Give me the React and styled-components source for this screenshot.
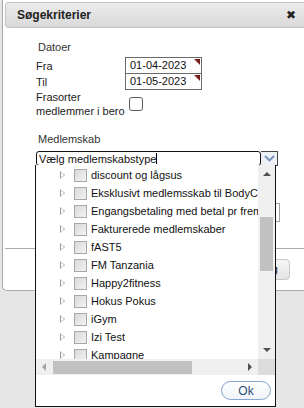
import React from "react";
import styled, { createGlobalStyle } from "styled-components";

const items = [
  "discount og lågsus",
  "Eksklusivt medlemsskab til BodyCoach",
  "Engangsbetaling med betal pr fremmøde",
  "Fakturerede medlemskaber",
  "fAST5",
  "FM Tanzania",
  "Happy2fitness",
  "Hokus Pokus",
  "iGym",
  "Izi Test",
  "Kampagne",
];

export default function App() {
  return (
    <Page>
      <Global />
      <Dialog>
        <Header>
          <Title>Søgekriterier</Title>
          <Close>✖</Close>
        </Header>
        <Body>
          <SectionTitle>Datoer</SectionTitle>
          <FieldRow>
            <Label>Fra</Label>
            <DateBox>01-04-2023</DateBox>
          </FieldRow>
          <FieldRow $joined>
            <Label>Til</Label>
            <DateBox>01-05-2023</DateBox>
          </FieldRow>
          <FieldRow>
            <Label $wrap>
              Frasorter
              <br />
              medlemmer i bero
            </Label>
            <Check />
          </FieldRow>
          <SectionTitle $gap>Medlemskab</SectionTitle>
          <Combo>
            <ComboInput>
              Vælg medlemskabstype<Caret />
            </ComboInput>
            <ComboButton>
              <svg width="11" height="7" viewBox="0 0 11 7">
                <path d="M1 1l4.5 4.5L10 1" fill="none" stroke="#6f8fbf" strokeWidth="1.8" />
              </svg>
            </ComboButton>
            <Popup>
              <ListArea>
                <List>
                  {items.map((t) => (
                    <Item key={t}>
                      <Expander />
                      <ItemCheck />
                      <ItemText>{t}</ItemText>
                    </Item>
                  ))}
                </List>
                <VScroll>
                  <Arrow $dir="up" />
                  <VThumb />
                  <Arrow $dir="down" />
                </VScroll>
              </ListArea>
              <HBar>
                <HScroll>
                  <Arrow $dir="left" $dim />
                  <HThumb />
                  <Arrow $dir="right" />
                </HScroll>
                <Corner />
              </HBar>
              <PopupFooter>
                <OkButton>Ok</OkButton>
              </PopupFooter>
            </Popup>
          </Combo>
          <BehindBox />
        </Body>
        <Footer>
          <SearchButton>Søg</SearchButton>
        </Footer>
      </Dialog>
    </Page>
  );
}

const Global = createGlobalStyle`
  html, body {
    margin: 0;
    background: #e6e6e6;
    font-family: "Liberation Sans", Arial, sans-serif;
    font-size: 11px;
    color: #222;
  }
`;

const Page = styled.div`
  height: 408px;
  position: relative;
`;

const Dialog = styled.div`
  position: relative;
  margin-left: 2px;
  height: 291px;
  box-sizing: border-box;
  background: #fff;
  border-left: 1px solid #a9a9a9;
  border-bottom: 1px solid #a9a9a9;
  border-bottom-left-radius: 5px;
  padding: 2px 0 0 2px;
  display: flex;
  flex-direction: column;
`;

const Header = styled.div`
  height: 26px;
  box-sizing: border-box;
  border: 1px solid #c4c4c4;
  border-right: none;
  border-radius: 4px 0 0 4px;
  background: linear-gradient(#ececec, #d9d9d9);
  display: flex;
  align-items: center;
  justify-content: space-between;
  padding: 0 8px 0 11px;
`;

const Title = styled.span`
  font-size: 12px;
  font-weight: bold;
  color: #222;
`;

const Close = styled.span`
  font-size: 12px;
  color: #222;
  font-family: "DejaVu Sans", sans-serif;
`;

const Body = styled.div`
  flex: 1;
  padding: 12px 0 0 31px;
  display: flex;
  flex-direction: column;
`;

const SectionTitle = styled.div`
  line-height: 14px;
  padding-left: 2px;
  color: #333;
  margin-top: ${(p) => (p.$gap ? "14px" : "0")};
  margin-bottom: ${(p) => (p.$gap ? "5px" : "3px")};
`;

const FieldRow = styled.div`
  display: flex;
  align-items: center;
  margin-top: ${(p) => (p.$joined ? "-1px" : "0")};
`;

const Label = styled.div`
  width: ${(p) => (p.$wrap ? "93px" : "89px")};
  line-height: 14px;
`;

const DateBox = styled.div`
  position: relative;
  width: 77px;
  height: 17px;
  box-sizing: border-box;
  border: 1px solid #6a6a6a;
  padding-left: 4px;
  line-height: 15px;
  font-size: 11px;
  color: #111;
  &::after {
    content: "";
    position: absolute;
    right: 1px;
    top: 1px;
    border-top: 6px solid #7c1d1d;
    border-left: 6px solid transparent;
  }
`;

const Check = styled.div`
  width: 12px;
  height: 12px;
  border: 1px solid #5c5c5c;
  border-radius: 3px;
  background: #fff;
`;

const Combo = styled.div`
  position: relative;
  display: flex;
  width: 242px;
  height: 15px;
  z-index: 2;
`;

const ComboInput = styled.div`
  flex: 1;
  box-sizing: border-box;
  border: 1.5px solid #111;
  border-radius: 3px;
  padding-left: 2px;
  line-height: 12px;
  font-size: 11px;
  color: #111;
  background: #fff;
  display: flex;
  align-items: center;
`;

const Caret = styled.span`
  width: 1px;
  height: 11px;
  background: #000;
`;

const ComboButton = styled.div`
  width: 17px;
  box-sizing: border-box;
  border: 1px solid #444;
  border-left: none;
  background: #edf0f4;
  display: flex;
  align-items: center;
  justify-content: center;
`;

const Popup = styled.div`
  position: absolute;
  top: 14px;
  left: -1px;
  width: 241px;
  height: 242px;
  box-sizing: border-box;
  border: 1px solid #111;
  border-top: none;
  background: #fff;
  display: flex;
  flex-direction: column;
`;

const ListArea = styled.div`
  display: flex;
  height: 194px;
  overflow: hidden;
`;

const List = styled.div`
  flex: 1;
  overflow: hidden;
  padding-top: 1px;
`;

const Item = styled.div`
  height: 18px;
  display: flex;
  align-items: center;
  padding-left: 24px;
  white-space: nowrap;
`;

const Expander = styled.span`
  width: 0;
  height: 0;
  border-left: 5px solid #9a9a9a;
  border-top: 4px solid transparent;
  border-bottom: 4px solid transparent;
  position: relative;
  margin-right: 9px;
  &::after {
    content: "";
    position: absolute;
    left: -4px;
    top: -3px;
    border-left: 3px solid #fff;
    border-top: 3px solid transparent;
    border-bottom: 3px solid transparent;
  }
`;

const ItemCheck = styled.span`
  width: 11px;
  height: 11px;
  flex-shrink: 0;
  border: 1px solid #a8a8a8;
  background: linear-gradient(135deg, #d9d9d9, #f3f3f3);
  margin-right: 4px;
`;

const ItemText = styled.span`
  font-size: 11px;
  color: #111;
  line-height: 14px;
`;

const VScroll = styled.div`
  width: 17px;
  flex-shrink: 0;
  background: #f0f0f0;
  position: relative;
  display: flex;
  flex-direction: column;
  align-items: center;
  justify-content: space-between;
  padding: 7px 0;
  box-sizing: border-box;
`;

const VThumb = styled.div`
  position: absolute;
  top: 52px;
  left: 2px;
  width: 13px;
  height: 54px;
  background: #c1c1c1;
`;

const arrowBorders = {
  up: "border-bottom: 4px solid; border-left: 4px solid transparent; border-right: 4px solid transparent;",
  down: "border-top: 4px solid; border-left: 4px solid transparent; border-right: 4px solid transparent;",
  left: "border-right: 4px solid; border-top: 4px solid transparent; border-bottom: 4px solid transparent;",
  right: "border-left: 4px solid; border-top: 4px solid transparent; border-bottom: 4px solid transparent;",
};

const Arrow = styled.span`
  width: 0;
  height: 0;
  color: ${(p) => (p.$dim ? "#a3a3a3" : "#505050")};
  ${(p) => arrowBorders[p.$dir]}
`;

const HBar = styled.div`
  display: flex;
  height: 16px;
`;

const HScroll = styled.div`
  flex: 1;
  background: #f0f0f0;
  display: flex;
  align-items: center;
  justify-content: space-between;
  padding: 0 6px;
  position: relative;
`;

const HThumb = styled.div`
  position: absolute;
  left: 17px;
  top: 2px;
  width: 139px;
  height: 13px;
  background: #c1c1c1;
`;

const Corner = styled.div`
  width: 17px;
  background: #dcdcdc;
`;

const PopupFooter = styled.div`
  flex: 1;
  display: flex;
  justify-content: flex-end;
  align-items: flex-start;
  padding: 6px 4px 0 0;
`;

const OkButton = styled.div`
  width: 50px;
  height: 19px;
  box-sizing: border-box;
  border: 1px solid #86a6cf;
  border-radius: 10px;
  background: linear-gradient(#ffffff, #f1f4f8);
  color: #2d4d78;
  font-size: 12px;
  display: flex;
  align-items: center;
  justify-content: center;
`;

const BehindBox = styled.div`
  margin-top: 37px;
  width: 242px;
  height: 17px;
  border: 1px solid #a0a0a0;
`;

const Footer = styled.div`
  height: 42px;
  box-sizing: border-box;
  border-top: 1px solid #a9a9a9;
  display: flex;
  justify-content: flex-end;
  align-items: flex-start;
  padding: 10px 14px 0 0;
`;

const SearchButton = styled.div`
  height: 19px;
  padding: 0 11px;
  border: 1px solid #c8c8c8;
  border-radius: 4px;
  background: linear-gradient(#f6f6f6, #e4e4e4);
  line-height: 19px;
  font-size: 11px;
  color: #222;
`;
